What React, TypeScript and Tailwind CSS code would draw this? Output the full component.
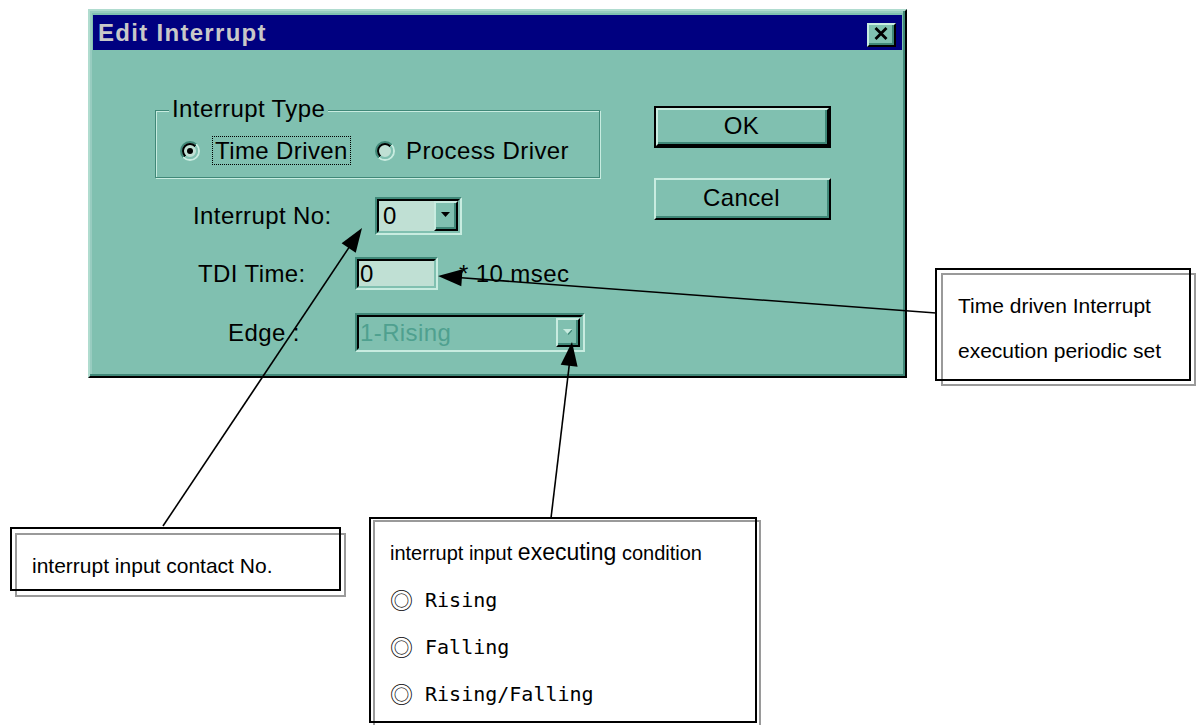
import React from "react";

function Radio({ checked }: { checked: boolean }) {
  return (
    <svg width="20" height="20" viewBox="0 0 20 20" className="shrink-0">
      <defs>
        <linearGradient id="rOuter" x1="0" y1="0" x2="1" y2="1">
          <stop offset="0.5" stopColor="#408878" />
          <stop offset="0.5" stopColor="#c8ece0" />
        </linearGradient>
        <linearGradient id="rInner" x1="0" y1="0" x2="1" y2="1">
          <stop offset="0.5" stopColor="#000000" />
          <stop offset="0.5" stopColor="#80c0b0" />
        </linearGradient>
      </defs>
      <circle cx="10" cy="10" r="9" fill="none" stroke="url(#rOuter)" strokeWidth="2" />
      <circle cx="10" cy="10" r="7" fill="#c0e0d4" stroke="url(#rInner)" strokeWidth="2" />
      {checked && <circle cx="10" cy="10" r="3" fill="#000" />}
    </svg>
  );
}

function DropBtn({ disabled }: { disabled?: boolean }) {
  return (
    <div className="w-[24px] h-full border-2 border-t-[#c8ece0] border-l-[#c8ece0] border-b-black border-r-black bg-[#80c0b0]">
      <div className="w-full h-full flex items-center justify-center border-b-2 border-r-2 border-b-[#408878] border-r-[#408878]">
        <svg width="9" height="6" viewBox="0 0 9 6">
          {disabled && <path d="M1 1H10L5.5 6Z" fill="#408878" />}
          <path d="M0 0H9L4.5 5Z" fill={disabled ? "#c8ece0" : "#000"} />
        </svg>
      </div>
    </div>
  );
}

function Arrow({ sx, sy, tx, ty }: { sx: number; sy: number; tx: number; ty: number }) {
  const L = 24;
  const W = 8.5;
  const dx = tx - sx;
  const dy = ty - sy;
  const len = Math.hypot(dx, dy);
  const ux = dx / len;
  const uy = dy / len;
  const bx = tx - ux * L;
  const by = ty - uy * L;
  const px = -uy;
  const py = ux;
  const pts = `${tx},${ty} ${bx + px * W},${by + py * W} ${bx - px * W},${by - py * W}`;
  return (
    <g>
      <line x1={sx} y1={sy} x2={bx + ux * 4} y2={by + uy * 4} stroke="#000" strokeWidth="1.6" />
      <polygon points={pts} fill="#000" />
    </g>
  );
}

export default function App() {
  return (
    <div className="relative w-[1197px] h-[725px] overflow-hidden bg-white font-['Liberation_Sans',Arial,sans-serif]">
      <div className="pt-[9px] pl-[88px]">
        {/* Dialog window */}
        <div className="w-[819px] h-[369px] bg-[#80c0b0] border-2 border-t-[#b0dccf] border-l-[#b0dccf] border-b-black border-r-black shadow-[inset_-2px_-2px_0_#408878,inset_2px_2px_0_#98ccc0] pt-[4px] px-[3px]">
          {/* Title bar */}
          <div className="h-[35px] bg-[#000080] flex items-center justify-between pl-[5px] pr-[6px]">
            <span className="text-[24px] leading-none font-bold tracking-[1.3px] text-[#c8c8c8]">Edit Interrupt</span>
            <div className="mt-[4px] w-[29px] h-[24px] bg-[#80c0b0] border-2 border-t-[#c8ece0] border-l-[#c8ece0] border-b-black border-r-black">
              <div className="w-full h-full flex items-center justify-center border-b-2 border-r-2 border-b-[#408878] border-r-[#408878]">
                <svg width="14" height="13" viewBox="0 0 14 13">
                  <path d="M1.5 1L12.5 12M12.5 1L1.5 12" stroke="#000" strokeWidth="2.8" />
                </svg>
              </div>
            </div>
          </div>

          {/* Body */}
          <div className="flex text-[24px] tracking-[0.4px] text-black">
            {/* Left column */}
            <div className="w-[507px] pl-[62px] pt-[60px]">
              {/* Group box */}
              <div className="relative w-[445px] h-[68px] border border-[#408878] shadow-[inset_1px_1px_0_#c8ece0,1px_1px_0_#c8ece0]">
                <span className="absolute left-[13px] top-[-16px] px-[3px] bg-[#80c0b0] leading-[28px]">Interrupt Type</span>
                <div className="flex items-center pl-[24px] pt-[25px]">
                  <Radio checked={true} />
                  <div className="ml-[12px] w-[139px] h-[29px] border border-dotted border-black flex items-center pl-[2px] leading-none">
                    Time Driven
                  </div>
                  <div className="ml-[24px]">
                    <Radio checked={false} />
                  </div>
                  <span className="ml-[11px] leading-none">Process Driver</span>
                </div>
              </div>

              {/* Rows */}
              <div className="mt-[19px] flex flex-col">
                <div className="flex items-center h-[38px]">
                  <div className="w-[220px] pl-[38px] leading-none">Interrupt No:</div>
                  <div className="w-[87px] h-[38px] border-2 border-t-[#408878] border-l-[#408878] border-b-[#c8ece0] border-r-[#c8ece0]">
                    <div className="w-full h-full flex border-2 border-t-black border-l-black border-b-[#80c0b0] border-r-[#80c0b0] bg-[#c0e0d4]">
                      <div className="flex-1 flex items-center pl-[4px] leading-none">0</div>
                      <DropBtn />
                    </div>
                  </div>
                </div>

                <div className="flex items-center h-[33px] mt-[22px]">
                  <div className="w-[200px] pl-[43px] leading-none">TDI Time:</div>
                  <div className="w-[83px] h-[33px] border-2 border-t-[#408878] border-l-[#408878] border-b-[#c8ece0] border-r-[#c8ece0]">
                    <div className="w-full h-full flex items-center border-2 border-t-black border-l-black border-b-[#80c0b0] border-r-[#80c0b0] bg-[#c0e0d4] pl-[1px] leading-none">
                      0
                    </div>
                  </div>
                  <span className="ml-[21px] leading-none">* 10 msec</span>
                </div>

                <div className="flex items-center h-[39px] mt-[23px]">
                  <div className="w-[200px] pl-[73px] leading-none">Edge :</div>
                  <div className="w-[230px] h-[39px] border-2 border-t-[#408878] border-l-[#408878] border-b-[#c8ece0] border-r-[#c8ece0]">
                    <div className="w-full h-full flex border-2 border-t-black border-l-black border-b-[#80c0b0] border-r-[#80c0b0] bg-[#80c0b0]">
                      <div className="flex-1 flex items-center pl-[1px] leading-none text-[#4fa08f]">1-Rising</div>
                      <div className="py-[1px] pr-[1px]">
                        <DropBtn disabled />
                      </div>
                    </div>
                  </div>
                </div>
              </div>
            </div>

            {/* Right column buttons */}
            <div className="ml-[54px] pt-[56px] flex flex-col">
              <div className="w-[177px] h-[42px] border-2 border-black">
                <div className="w-full h-full border-2 border-t-[#c8ece0] border-l-[#c8ece0] border-b-black border-r-black">
                  <div className="w-full h-full flex items-center justify-center border-b-2 border-r-2 border-b-[#408878] border-r-[#408878] leading-none">
                    OK
                  </div>
                </div>
              </div>
              <div className="mt-[30px] w-[177px] h-[42px] border-2 border-t-[#c8ece0] border-l-[#c8ece0] border-b-black border-r-black">
                <div className="w-full h-full flex items-center justify-center border-b-2 border-r-2 border-b-[#408878] border-r-[#408878] leading-none">
                  Cancel
                </div>
              </div>
            </div>
          </div>
        </div>
      </div>

      {/* Callout: right */}
      <div className="absolute left-[941px] top-[273px] w-[255px] h-[113px] border-2 border-[#9a9a9a]" />
      <div className="absolute left-[935px] top-[268px] w-[256px] h-[113px] border-2 border-black pt-[13px] pl-[21px] text-[21px] leading-[45px] text-black">
        <div>Time driven Interrupt</div>
        <div>execution periodic set</div>
      </div>

      {/* Callout: left bottom */}
      <div className="absolute left-[15px] top-[533px] w-[331px] h-[64px] border-2 border-[#9a9a9a]" />
      <div className="absolute left-[10px] top-[527px] w-[331px] h-[64px] border-2 border-black pt-[25px] pl-[20px] text-[21px] leading-[24px] text-black">
        interrupt input contact No.
      </div>

      {/* Callout: middle bottom */}
      <div className="absolute left-[373px] top-[520px] w-[388px] h-[215px] border-2 border-[#9a9a9a]" />
      <div className="absolute left-[369px] top-[517px] w-[388px] h-[206px] border-2 border-black pt-[10px] pl-[19px] text-black">
        <div className="h-[47px] flex items-center text-[20px] leading-none whitespace-pre">
          interrupt input <span className="text-[23px] leading-none">executing</span> condition
        </div>
        <div className="h-[47px] flex items-center text-[20px] leading-none whitespace-pre font-['DejaVu_Sans_Mono',monospace] font-light">
          <span className="text-[23px] leading-none font-['Noto_Sans_CJK_KR',sans-serif] font-light">◎</span> Rising
        </div>
        <div className="h-[47px] flex items-center text-[20px] leading-none whitespace-pre font-['DejaVu_Sans_Mono',monospace] font-light">
          <span className="text-[23px] leading-none font-['Noto_Sans_CJK_KR',sans-serif] font-light">◎</span> Falling
        </div>
        <div className="h-[47px] flex items-center text-[20px] leading-none whitespace-pre font-['DejaVu_Sans_Mono',monospace] font-light">
          <span className="text-[23px] leading-none font-['Noto_Sans_CJK_KR',sans-serif] font-light">◎</span> Rising/Falling
        </div>
      </div>

      {/* Arrows overlay */}
      <svg className="absolute left-0 top-0 pointer-events-none" width="1197" height="725" viewBox="0 0 1197 725">
        <Arrow sx={163} sy={526} tx={362} ty={228} />
        <Arrow sx={936} sy={313} tx={438} ty={276} />
        <Arrow sx={551} sy={518} tx={572} ty={342} />
      </svg>
    </div>
  );
}
